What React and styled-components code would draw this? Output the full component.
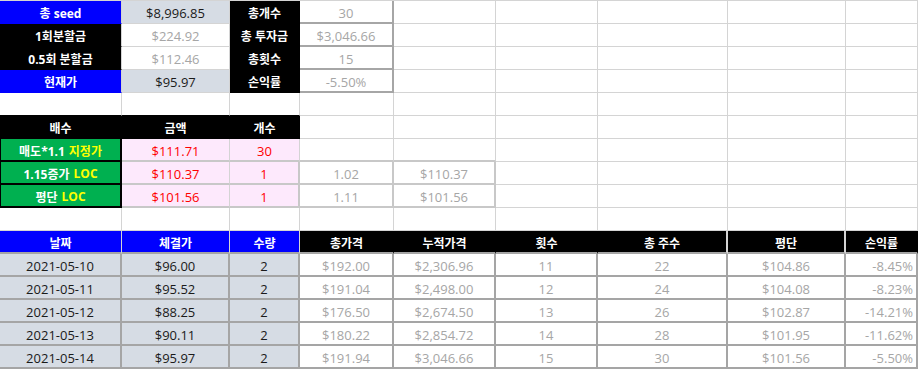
import React from "react";
import styled, { createGlobalStyle } from "styled-components";

const GlobalStyle = createGlobalStyle`
  html, body {
    margin: 0;
    padding: 0;
    background: #fff;
  }
  body {
    font-family: "Open Sans", "Noto Sans CJK KR", sans-serif;
    font-size: 13px;
  }
`;

const Sheet = styled.div`
  display: grid;
  grid-template-columns: 122px 108px 70px 94px 102px 102px 130px 118px 72px;
  grid-auto-rows: 23px;
  width: 918px;
  border-top: 1px solid #d4d4d4;
`;

const Cell = styled.div`
  box-sizing: border-box;
  display: flex;
  align-items: center;
  justify-content: ${(p) => p.$align || "center"};
  padding: 2px 3px 0;
  background: #fff;
  border-right: 1px solid #d4d4d4;
  border-bottom: ${(p) => p.$under || "1px solid #d4d4d4"};
  white-space: nowrap;
  overflow: hidden;
  color: #a6a6a6;
`;

const Label = styled(Cell)`
  background: ${(p) => p.$bg};
  color: #fff;
  font-size: 12px;
  font-weight: 700;
  border-right: ${(p) => p.$sep || `1px solid ${p.$bg}`};
  border-bottom: ${(p) => p.$under || `1px solid ${p.$bg}`};
`;

const Value = styled(Cell)`
  background: ${(p) => (p.$shade ? "#d6dce4" : "#fff")};
  color: ${(p) => (p.$shade ? "#1a1a1a" : "#a6a6a6")};
`;

const Boxed = styled(Cell)`
  border-right: 2px solid ${(p) => p.$line};
  border-bottom: 2px solid ${(p) => p.$line};
`;

const Order = styled(Cell)`
  background: #00b050;
  color: #fff;
  font-size: 12px;
  font-weight: 700;
  border-left: 1px solid #000;
  border-right: 2px solid #000;
  border-bottom: 2px solid #000;
`;

const Tag = styled.span`
  color: #ffff00;
  margin-left: 4px;
`;

const Pink = styled(Cell)`
  background: #fde9fc;
  color: #ff0000;
  border-right: ${(p) => (p.$edge ? "2px solid #c8c8c8" : "1px solid #d4d4d4")};
  border-bottom: 2px solid #c8c8c8;
`;

const Trade = styled(Cell)`
  background: ${(p) => (p.$shade ? "#d6dce4" : "#fff")};
  color: ${(p) => (p.$shade ? "#1a1a1a" : "#a6a6a6")};
  border-right: 2px solid #a5a5a5;
  border-bottom: 2px solid #a5a5a5;
`;

const blanks = (n, key, props = {}) =>
  Array.from({ length: n }, (_, i) => <Cell key={`${key}-${i}`} {...props} />);

const summary = [
  { label: "총 seed", bg: "#0000ff", value: "$8,996.85", shade: true, label2: "총개수", value2: "30" },
  { label: "1회분할금", bg: "#000", value: "$224.92", label2: "총 투자금", value2: "$3,046.66" },
  { label: "0.5회 분할금", bg: "#000", value: "$112.46", label2: "총횟수", value2: "15" },
  { label: "현재가", bg: "#0000ff", value: "$95.97", shade: true, label2: "손익률", value2: "-5.50%" },
];

const orders = [
  { name: "매도*1.1", tag: "지정가", price: "$111.71", qty: "30" },
  { name: "1.15증가", tag: "LOC", price: "$110.37", qty: "1", ratio: "1.02", target: "$110.37" },
  { name: "평단", tag: "LOC", price: "$101.56", qty: "1", ratio: "1.11", target: "$101.56" },
];

const headers = [
  { text: "날짜", bg: "#0000ff", sep: "1px solid #d4d4d4" },
  { text: "체결가", bg: "#0000ff", sep: "1px solid #d4d4d4" },
  { text: "수량", bg: "#0000ff", sep: "1px solid #d4d4d4" },
  { text: "총가격", bg: "#000" },
  { text: "누적가격", bg: "#000" },
  { text: "횟수", bg: "#000" },
  { text: "총 주수", bg: "#000", sep: "2px solid #d4d4d4" },
  { text: "평단", bg: "#000", sep: "2px solid #d4d4d4" },
  { text: "손익률", bg: "#000" },
];

const trades = [
  ["2021-05-10", "$96.00", "2", "$192.00", "$2,306.96", "11", "22", "$104.86", "-8.45%"],
  ["2021-05-11", "$95.52", "2", "$191.04", "$2,498.00", "12", "24", "$104.08", "-8.23%"],
  ["2021-05-12", "$88.25", "2", "$176.50", "$2,674.50", "13", "26", "$102.87", "-14.21%"],
  ["2021-05-13", "$90.11", "2", "$180.22", "$2,854.72", "14", "28", "$101.95", "-11.62%"],
  ["2021-05-14", "$95.97", "2", "$191.94", "$3,046.66", "15", "30", "$101.56", "-5.50%"],
];

export default function App() {
  return (
    <>
      <GlobalStyle />
      <Sheet>
        {summary.map((row, r) => (
          <React.Fragment key={`s${r}`}>
            <Label $bg={row.bg} $sep="1px solid #d4d4d4">{row.label}</Label>
            <Value $shade={row.shade}>{row.value}</Value>
            <Label $bg="#000">{row.label2}</Label>
            <Boxed $line="#a6a6a6">{row.value2}</Boxed>
            {blanks(5, `s${r}`)}
          </React.Fragment>
        ))}

        {blanks(3, "gap1", { $under: "1px solid #000" })}
        {blanks(6, "gap1b")}

        <Label $bg="#000">배수</Label>
        <Label $bg="#000">금액</Label>
        <Label $bg="#000">개수</Label>
        {blanks(6, "ohead")}

        {orders.map((o, r) => (
          <React.Fragment key={`o${r}`}>
            <Order>
              {o.name}
              <Tag>{o.tag}</Tag>
            </Order>
            <Pink>{o.price}</Pink>
            <Pink $edge={!!o.ratio}>{o.qty}</Pink>
            {o.ratio ? (
              <>
                <Boxed $line="#c8c8c8">{o.ratio}</Boxed>
                <Boxed $line="#c8c8c8">{o.target}</Boxed>
              </>
            ) : (
              blanks(2, `o${r}top`, { $under: "2px solid #c8c8c8" })
            )}
            {blanks(4, `o${r}`)}
          </React.Fragment>
        ))}

        {blanks(9, "gap2")}

        {headers.map((h) => (
          <Label key={h.text} $bg={h.bg} $sep={h.sep} $under="2px solid #a5a5a5">
            {h.text}
          </Label>
        ))}

        {trades.map((row, r) =>
          row.map((v, c) => (
            <Trade
              key={`t${r}-${c}`}
              $shade={c < 3}
              $align={c === 8 ? "flex-end" : "center"}
            >
              {v}
            </Trade>
          ))
        )}
      </Sheet>
    </>
  );
}
